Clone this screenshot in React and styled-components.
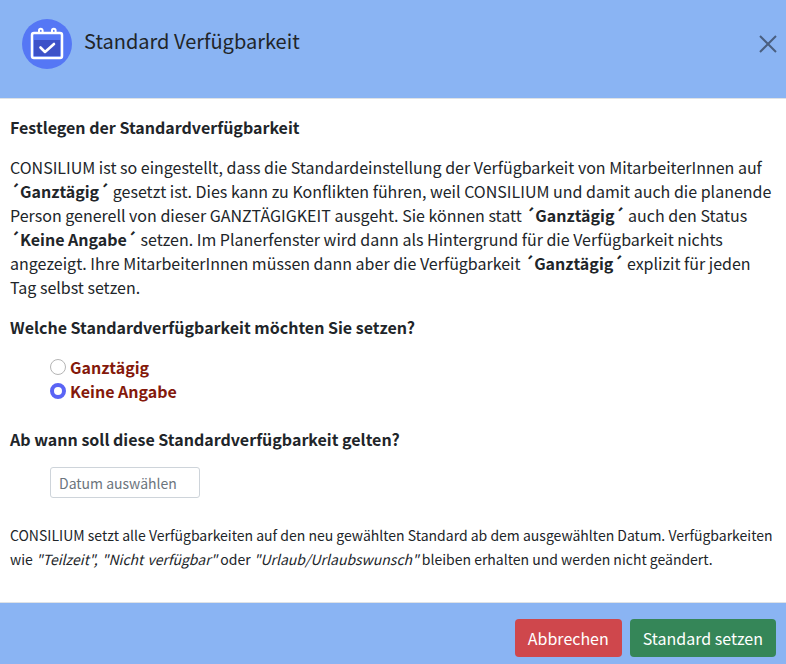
import React from "react";
import styled, { createGlobalStyle } from "styled-components";

const Global = createGlobalStyle`
  html, body { margin: 0; padding: 0; background: #fff; }
  body { font-family: "Noto Sans CJK SC", "Noto Sans", sans-serif; color: #212529; }
  * { box-sizing: border-box; }
`;

const Dialog = styled.div`
  width: 786px;
  height: 664px;
  display: flex;
  flex-direction: column;
  background: #fff;
`;

const Header = styled.header`
  height: 99px;
  flex: none;
  background: #8ab4f3;
  border-bottom: 1px solid #dee2e6;
  display: flex;
  align-items: center;
  padding: 0 6px 10px 22px;
`;

const Badge = styled.div`
  width: 50px;
  height: 50px;
  border-radius: 50%;
  background: #5577f5;
  display: flex;
  align-items: center;
  justify-content: center;
`;

const Title = styled.h1`
  margin: 0 0 6px 12px;
  flex: 1;
  font-size: 20px;
  line-height: 30px;
  font-weight: 400;
  color: #212529;
`;

const Close = styled.button`
  border: 0;
  background: none;
  padding: 0;
  width: 24px;
  height: 24px;
  color: #4a5f80;
`;

const Body = styled.main`
  flex: 1;
  padding: 16px 10px 0;
`;

const Heading = styled.h2`
  margin: 0;
  font-size: 16px;
  line-height: 24px;
  font-weight: 700;
`;

const Para = styled.p`
  margin: 16px 0;
  font-size: 16px;
  line-height: 24px;
`;

const Options = styled.div`
  margin: 16px 0 24px 40px;
`;

const Option = styled.label`
  display: flex;
  align-items: center;
  gap: 4px;
  height: 24px;
  font-size: 16px;
  font-weight: 700;
  color: #84190b;
`;

const Radio = styled.span`
  width: 16px;
  height: 16px;
  border-radius: 50%;
  background: #fff;
  border: ${(p) => (p.$on ? "4px solid #5a64f5" : "1px solid #b5b5b5")};
`;

const DateInput = styled.div`
  width: 150px;
  height: 31px;
  margin: 16px 0 25px 40px;
  border: 1px solid #ced4da;
  border-radius: 3px;
  padding: 0 8px;
  display: flex;
  align-items: center;
  font-size: 14px;
  color: #6c757d;
`;

const Note = styled.p`
  margin: 0;
  font-size: 14px;
  line-height: 24px;
`;

const Status = styled.i`
  word-spacing: 1px;
`;

const Footer = styled.footer`
  height: 62px;
  flex: none;
  background: #8ab4f3;
  border-top: 1px solid #dee2e6;
  display: flex;
  align-items: center;
  justify-content: flex-end;
  gap: 8px;
  padding: 8px 10px 0;
`;

const Button = styled.button`
  height: 38px;
  padding: 0 13px;
  border: 0;
  border-radius: 4px;
  font: 400 16px "Noto Sans CJK SC", "Noto Sans", sans-serif;
  color: #fff;
  background: ${(p) => p.$bg};
`;

const App = () => (
  <Dialog>
    <Global />
    <Header>
      <Badge>
        <svg width="36" height="36" viewBox="0 0 36 36" fill="none" stroke="#fff" strokeWidth="2.5" strokeLinecap="round" strokeLinejoin="round">
          <rect x="3" y="7" width="30" height="25" rx="2" />
          <rect x="5" y="14" width="26" height="16" fill="#3d52c8" stroke="none" />
          <path d="M10 7V4.5a1.8 1.8 0 0 1 3.6 0V7M23 7V4.5a1.8 1.8 0 0 1 3.6 0V7" strokeWidth="2" />
          <path d="M11.5 21.5l4.5 4.5 9-8" strokeWidth="2.6" />
        </svg>
      </Badge>
      <Title>Standard Verfügbarkeit</Title>
      <Close aria-label="Schließen">
        <svg width="24" height="24" viewBox="0 0 24 24" fill="none" stroke="currentColor" strokeWidth="2">
          <path d="M4 4l16 16M20 4L4 20" />
        </svg>
      </Close>
    </Header>
    <Body>
      <Heading>Festlegen der Standardverfügbarkeit</Heading>
      <Para>
        CONSILIUM ist so eingestellt, dass die Standardeinstellung der Verfügbarkeit von MitarbeiterInnen auf{" "}
        <b>´Ganztägig´</b> gesetzt ist. Dies kann zu Konflikten führen, weil CONSILIUM und damit auch die planende
        Person generell von dieser GANZTÄGIGKEIT ausgeht. Sie können statt <b>´Ganztägig´</b> auch den Status{" "}
        <b>´Keine Angabe´</b> setzen. Im Planerfenster wird dann als Hintergrund für die Verfügbarkeit nichts
        angezeigt. Ihre MitarbeiterInnen müssen dann aber die Verfügbarkeit <b>´Ganztägig´</b> explizit für jeden
        Tag selbst setzen.
      </Para>
      <Heading>Welche Standardverfügbarkeit möchten Sie setzen?</Heading>
      <Options>
        <Option>
          <Radio />
          Ganztägig
        </Option>
        <Option>
          <Radio $on />
          Keine Angabe
        </Option>
      </Options>
      <Heading>Ab wann soll diese Standardverfügbarkeit gelten?</Heading>
      <DateInput>Datum auswählen</DateInput>
      <Note>
        CONSILIUM setzt alle Verfügbarkeiten auf den neu gewählten Standard ab dem ausgewählten Datum. Verfügbarkeiten
        wie <Status>"Teilzeit", "Nicht verfügbar"</Status> oder <Status>"Urlaub/Urlaubswunsch"</Status> bleiben erhalten und werden nicht
        geändert.
      </Note>
    </Body>
    <Footer>
      <Button $bg="#cf474c">Abbrechen</Button>
      <Button $bg="#358658">Standard setzen</Button>
    </Footer>
  </Dialog>
);

export default App;
